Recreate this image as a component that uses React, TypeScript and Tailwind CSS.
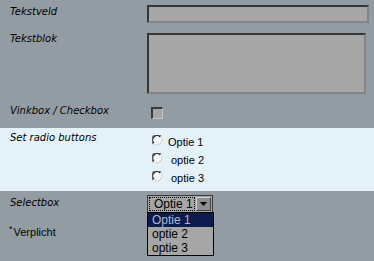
import React from "react";

const label = "pl-[10px] w-[147px] shrink-0 text-[10px] leading-[12px] italic text-black font-['DejaVu_Sans',sans-serif]";

function Radio() {
  return (
    <svg width="12" height="12" viewBox="0 0 12 12" className="shrink-0">
      <circle cx="6" cy="6" r="5.5" fill="#f4f6f8" />
      <path d="M1.2 9 A5.3 5.3 0 0 1 9 1.2" fill="none" stroke="#6f6f6f" strokeWidth="1.2" />
      <path d="M2 8.2 A4.3 4.3 0 0 1 8.2 2" fill="none" stroke="#2e2e2e" strokeWidth="1.2" />
      <path d="M9.6 2.6 A5.3 5.3 0 0 1 2.6 9.6" fill="none" stroke="#d4d4d4" strokeWidth="1.2" />
    </svg>
  );
}

export default function App() {
  const opts = ["Optie 1", "optie 2", "optie 3"];
  return (
    <div className="w-[374px] h-[261px] bg-[#949ca3] overflow-hidden font-['Liberation_Sans',Arial,sans-serif] text-black">
      <div className="flex pt-[5px] h-[33px]">
        <div className={label + " mt-[1px]"}>Tekstveld</div>
        <div className="w-[222px] h-[18px] bg-[#a6a6a6] border-t-2 border-l-2 border-t-[#363636] border-l-[#363636] border-b-2 border-r-2 border-b-[#828488] border-r-[#828488]" />
      </div>
      <div className="flex h-[61px]">
        <div className={label}>Tekstblok</div>
        <div className="w-[219px] h-[61px] bg-[#a6a6a6] border-t-2 border-l-2 border-t-[#363636] border-l-[#363636] border-b-2 border-r-2 border-b-[#828488] border-r-[#828488]" />
      </div>
      <div className="flex pt-[11px] h-[34px]">
        <div className={label}>Vinkbox / Checkbox</div>
        <div className="ml-[4px] mt-[2px] w-[12px] h-[12px] bg-[#a6a6a6] border-t-2 border-l-2 border-t-[#3a3a3a] border-l-[#3a3a3a] border-b border-r border-b-[#c4c6c8] border-r-[#c4c6c8]" />
      </div>
      <div className="flex bg-[#e4f1f9] h-[63px] pt-[4px]">
        <div className={label}>Set radio buttons</div>
        <div className="flex flex-col pt-[1px]">
          {opts.map((o, i) => (
            <div key={o} className="flex items-start h-[18px] ml-[5px]">
              <div className="mt-[2px]">
                <Radio />
              </div>
              <span className={`mt-[3px] text-[11px] leading-[13px] ${i === 0 ? "ml-[4px]" : "ml-[7px]"}`}>{o}</span>
            </div>
          ))}
        </div>
      </div>
      <div className="flex h-[24px] pt-[6px]">
        <div className={label}>Selectbox</div>
        <div className="relative -mt-[2px]">
          <div className="flex w-[66px] h-[18px] bg-[#a6a6a6] border border-[#3a3a3a] p-px">
            <div className="flex-1 border border-dotted border-black text-[12px] leading-[13px] pl-[4px] whitespace-nowrap overflow-hidden">Optie 1</div>
            <div className="w-[15px] ml-px bg-[#8f8f8f] border-t border-l border-t-[#d0d0d0] border-l-[#d0d0d0] border-b border-r border-b-[#404040] border-r-[#404040] flex items-center justify-center">
              <svg width="7" height="4" viewBox="0 0 7 4">
                <path d="M0 0 H7 L3.5 4 Z" fill="#000" />
              </svg>
            </div>
          </div>
          <div className="absolute left-0 top-[17px] w-[67px] bg-[#a6a6a6] border border-black text-[12px] leading-[14px] z-10">
            {opts.map((o, i) => (
              <div key={o} className={`pl-[4px] h-[14px] ${i === 0 ? "bg-[#0b1b4c] text-[#aebcd8]" : ""}`}>{o}</div>
            ))}
          </div>
        </div>
      </div>
      <div className="flex items-start pl-[9px] pt-[11px] text-[11px] leading-[13px]">
        <span className="text-[9px] leading-[9px] mt-[-1px] mr-[1px]">*</span>
        <span>Verplicht</span>
      </div>
    </div>
  );
}
